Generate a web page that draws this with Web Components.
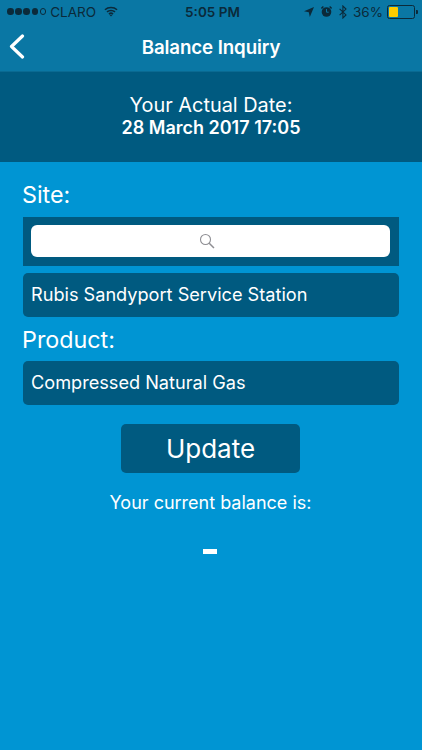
<!DOCTYPE html>
<html>
<head>
<meta charset="utf-8">
<title>Balance Inquiry</title>
<style>
  html, body { margin: 0; height: 100%; }
  body { width: 422px; height: 750px; overflow: hidden; background: #0095d3; font-family: Inter, "Liberation Sans", sans-serif; color: #fff; }
</style>
</head>
<body>
<balance-screen></balance-screen>

<script>
class StatusBar extends HTMLElement {
  connectedCallback() {
    this.attachShadow({ mode: 'open' }).innerHTML = `
      <style>
        :host { display: grid; grid-template-columns: 1fr auto 1fr; align-items: center; height: 23px; padding: 0 4px 0 7px; color: #0b2a3a; font-size: 13.5px; }
        .left, .right { display: flex; align-items: center; }
        .right { justify-content: flex-end; }
        .dots { display: flex; gap: 1.7px; margin-right: 4px; }
        .dots i { width: 6.5px; height: 6.5px; border-radius: 50%; background: #0b2a3a; box-sizing: border-box; }
        .dots i:last-child { background: none; border: 1px solid #0b2a3a; }
        .carrier { margin-right: 8px; }
        .time { font-weight: 600; }
        svg { display: block; }
        .pct { margin: 0 4px 0 6px; }
        .batt { width: 24px; height: 10px; border: 1px solid #0b2a3a; border-radius: 2.5px; padding: 1px; margin-right: 1px; }
        .batt b { display: block; width: 9px; height: 100%; background: #ffcc00; border-radius: 1px; }
        .nub { width: 2px; height: 4px; background: #0b2a3a; border-radius: 0 1px 1px 0; }
        .gap { margin-left: 7px; }
      </style>
      <div class="left">
        <span class="dots"><i></i><i></i><i></i><i></i><i></i></span>
        <span class="carrier">CLARO</span>
        <svg width="14" height="11" viewBox="0 0 15 11" fill="none" stroke="#0b2a3a" stroke-width="1.7">
          <path d="M1 3.6C4.6 .4 10.4 .4 14 3.6"/>
          <path d="M3.2 6C5.6 3.9 9.4 3.9 11.8 6"/>
          <path d="M5.3 8.2C6.5 7.2 8.5 7.2 9.7 8.2"/>
          <path d="M7.5 10.9 6 9.3C6.9 8.7 8.1 8.7 9 9.3Z" fill="#0b2a3a" stroke="none"/>
        </svg>
      </div>
      <div class="time">5:05 PM</div>
      <div class="right">
        <svg width="10" height="10" viewBox="0 0 10 10" fill="#0b2a3a"><path d="M10 0 5.8 10 4.8 5.2 0 4.2Z"/></svg>
        <svg class="gap" width="11" height="11" viewBox="0 0 11 11">
          <circle cx="5.5" cy="6" r="4.8" fill="#0b2a3a"/>
          <path d="M5.5 3v3.2h2.2" fill="none" stroke="#0a77a4" stroke-width="1"/>
          <path d="M.4 2.4 2.4.6M10.6 2.4 8.6.6" stroke="#0b2a3a" stroke-width="1.4"/>
        </svg>
        <svg class="gap" width="8" height="14" viewBox="0 0 8 14" fill="none" stroke="#0b2a3a" stroke-width="1.1">
          <path d="M.6 3.8 7 9.9 3.9 13V1L7 4.1.6 10.2"/>
        </svg>
        <span class="pct">36%</span>
        <span class="batt"><b></b></span><span class="nub"></span>
      </div>`;
  }
}

class NavBar extends HTMLElement {
  connectedCallback() {
    this.attachShadow({ mode: 'open' }).innerHTML = `
      <style>
        :host { display: block; background: #0a77a4; height: 72px; box-sizing: border-box; border-bottom: 1px solid #0a6a92; }
        .bar { position: relative; display: flex; align-items: center; justify-content: center; height: 48px; font-size: 18.7px; font-weight: 600; letter-spacing: -.1px; }
        svg { position: absolute; left: 9px; top: 11px; }
      </style>
      <status-bar></status-bar>
      <div class="bar">
        <svg width="16" height="25" viewBox="0 0 16 25" fill="none" stroke="#fff" stroke-width="3.2" stroke-linecap="round" stroke-linejoin="round"><path d="M13.5 2 2.5 12.5 13.5 23"/></svg>
        <slot></slot>
      </div>`;
  }
}

class DateBand extends HTMLElement {
  connectedCallback() {
    this.attachShadow({ mode: 'open' }).innerHTML = `
      <style>
        :host { display: flex; flex-direction: column; align-items: center; justify-content: center; height: 90px; background: #005a80; text-align: center; padding-bottom: 2px; box-sizing: border-box; }
        .label { font-size: 19.9px; line-height: 24px; }
        .date { font-size: 18px; font-weight: 600; line-height: 22px; }
      </style>
      <div class="label"><slot name="label"></slot></div>
      <div class="date"><slot name="date"></slot></div>`;
  }
}

class SearchBox extends HTMLElement {
  connectedCallback() {
    this.attachShadow({ mode: 'open' }).innerHTML = `
      <style>
        :host { display: block; background: #005a80; padding: 8px 9px 9px 8px; }
        .field { display: flex; align-items: center; justify-content: center; height: 32px; background: #fff; border-radius: 6px; }
        svg { display: block; margin-left: -8px; }
      </style>
      <div class="field">
        <svg width="16" height="16" viewBox="0 0 16 16" fill="none" stroke="#8e8e93" stroke-width="1.1">
          <circle cx="6.5" cy="6.5" r="5"/>
          <path d="M10.2 10.2 15 15" stroke-width="1.5"/>
        </svg>
      </div>`;
  }
}

class SelectRow extends HTMLElement {
  connectedCallback() {
    this.attachShadow({ mode: 'open' }).innerHTML = `
      <style>
        :host { display: flex; align-items: center; height: 44px; padding: 0 8px 2px; box-sizing: border-box; background: #005a80; border-radius: 5px; font-size: 18.15px; }
      </style>
      <slot></slot>`;
  }
}

class BalanceScreen extends HTMLElement {
  connectedCallback() {
    this.attachShadow({ mode: 'open' }).innerHTML = `
      <style>
        :host { display: block; }
        main { display: flex; flex-direction: column; padding: 0 23px; }
        .heading { font-size: 23.3px; line-height: 30px; margin-left: -1px; }
        .site { margin-top: 18px; margin-bottom: 7px; }
        search-box { margin-bottom: 7px; }
        .product { margin-top: 8px; margin-bottom: 6px; }
        button { align-self: center; width: 179px; height: 49px; margin: 19px 1px 0 0; border: 0; border-radius: 5px; background: #005a80; color: #fff; font: 400 26px Inter, "Liberation Sans", sans-serif; }
        .balance { margin: 18px 1px 0 0; text-align: center; font-size: 18px; line-height: 24px; }
        .dash { align-self: center; width: 14px; height: 5px; margin: 34px 2px 0 0; background: #fff; }
      </style>
      <nav-bar>Balance Inquiry</nav-bar>
      <date-band>
        <span slot="label">Your Actual Date:</span>
        <span slot="date">28 March 2017 17:05</span>
      </date-band>
      <main>
        <div class="heading site">Site:</div>
        <search-box></search-box>
        <select-row>Rubis Sandyport Service Station</select-row>
        <div class="heading product">Product:</div>
        <select-row>Compressed Natural Gas</select-row>
        <button>Update</button>
        <div class="balance">Your current balance is:</div>
        <div class="dash"></div>
      </main>`;
  }
}

customElements.define('status-bar', StatusBar);
customElements.define('nav-bar', NavBar);
customElements.define('date-band', DateBand);
customElements.define('search-box', SearchBox);
customElements.define('select-row', SelectRow);
customElements.define('balance-screen', BalanceScreen);
</script>
</body>
</html>
